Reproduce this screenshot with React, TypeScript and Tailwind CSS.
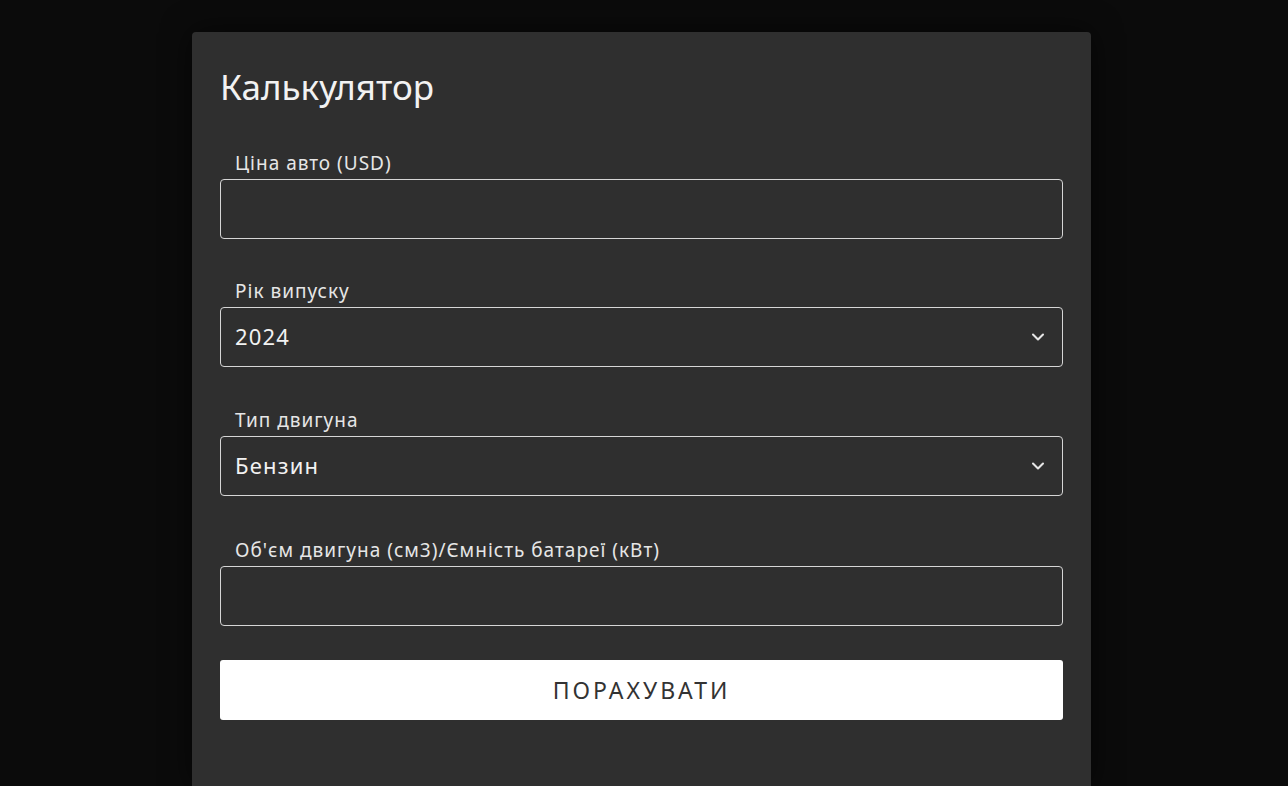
import { ChevronDown } from "lucide-react";

const font = { fontFamily: '"Noto Sans", "Open Sans", sans-serif' };

function Label({ children }: { children: React.ReactNode }) {
  return <div className="pl-[15px] text-[19px] leading-[22px] tracking-[1px] text-[#e6e6e6]">{children}</div>;
}

function TextField({ label }: { label: string }) {
  return (
    <div className="flex flex-col gap-[5px]">
      <Label>{label}</Label>
      <div className="h-[60px] rounded-[4px] border-[1.5px] border-[#d6d6d6]" />
    </div>
  );
}

function SelectField({ label, value }: { label: string; value: string }) {
  return (
    <div className="flex flex-col gap-[5px]">
      <Label>{label}</Label>
      <div className="flex h-[60px] items-center justify-between rounded-[4px] border-[1.5px] border-[#d6d6d6] pl-[14px] pr-[14px]">
        <span className="-mt-[2px] text-[22px] tracking-[1.2px] text-[#f2f2f2]">{value}</span>
        <ChevronDown className="h-5 w-5 text-[#e6e6e6]" strokeWidth={2.5} />
      </div>
    </div>
  );
}

export default function App() {
  return (
    <div className="min-h-[786px] bg-[#0b0b0b] pt-[32px]" style={font}>
      <div className="ml-[192px] h-[754px] w-[899px] rounded-t-[4px] bg-[#2f2f2f] px-[28px] pt-[33px] shadow-[0_0_30px_rgba(0,0,0,0.6)]">
        <h1 className="text-[35px] leading-[44px] text-[#f2f2f2]">Калькулятор</h1>
        <div className="mt-[43px] flex flex-col">
          <TextField label="Ціна авто (USD)" />
          <div className="mt-[41px]">
            <SelectField label="Рік випуску" value="2024" />
          </div>
          <div className="mt-[42px]">
            <SelectField label="Тип двигуна" value="Бензин" />
          </div>
          <div className="mt-[43px]">
            <TextField label="Об'єм двигуна (см3)/Ємність батареї (кВт)" />
          </div>
          <button className="mt-[34px] h-[60px] rounded-[3px] bg-white text-[23px] tracking-[3px] text-[#333333]">
            ПОРАХУВАТИ
          </button>
        </div>
      </div>
    </div>
  );
}
